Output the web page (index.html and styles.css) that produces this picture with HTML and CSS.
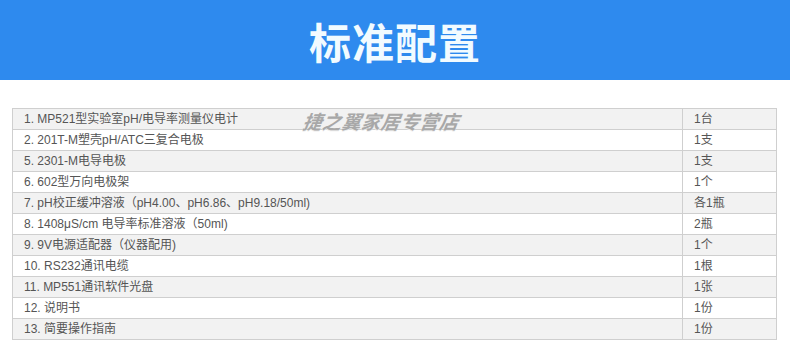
FILE: index.html
```html
<!DOCTYPE html>
<html lang="zh">
<head>
<meta charset="utf-8">
<link rel="stylesheet" href="styles.css">
</head>
<body>
<header class="banner"><h1 class="title">标准配置</h1></header>
<div class="wrap">
  <table class="cfg">
    <tr><td class="name">1. MP521型实验室pH/电导率测量仪电计</td><td class="qty">1台</td></tr>
    <tr><td class="name">2. 201T-M塑壳pH/ATC三复合电极</td><td class="qty">1支</td></tr>
    <tr><td class="name">5. 2301-M电导电极</td><td class="qty">1支</td></tr>
    <tr><td class="name">6. 602型万向电极架</td><td class="qty">1个</td></tr>
    <tr><td class="name">7. pH校正缓冲溶液（pH4.00、pH6.86、pH9.18/50ml)</td><td class="qty">各1瓶</td></tr>
    <tr><td class="name">8. 1408μS/cm 电导率标准溶液（50ml)</td><td class="qty">2瓶</td></tr>
    <tr><td class="name">9. 9V电源适配器（仪器配用)</td><td class="qty">1个</td></tr>
    <tr><td class="name">10. RS232通讯电缆</td><td class="qty">1根</td></tr>
    <tr><td class="name">11. MP551通讯软件光盘</td><td class="qty">1张</td></tr>
    <tr><td class="name">12. 说明书</td><td class="qty">1份</td></tr>
    <tr><td class="name">13. 简要操作指南</td><td class="qty">1份</td></tr>
  </table>
  <div class="mark">捷之翼家居专营店</div>
</div>
</body>
</html>
```
FILE: styles.css
```css
html, body { margin: 0; padding: 0; background: #fff; }
body { font-family: "Noto Sans CJK SC", "Liberation Sans", sans-serif; }
.banner {
  height: 80px;
  background: #2e8aee;
  display: flex;
  align-items: center;
  justify-content: center;
}
.title {
  margin: 0;
  color: #f2fbff;
  font-size: 42px;
  font-weight: 700;
  line-height: 1;
  letter-spacing: 1px;
  padding-top: 2px;
}
.wrap {
  position: relative;
  padding: 28px 13px 0 12px;
}
.cfg {
  width: 765px;
  border-collapse: collapse;
  font-family: "Liberation Sans", "Noto Sans CJK SC", sans-serif;
  font-size: 12px;
  color: #555;
}
.cfg td {
  border: 1px solid #cfcfcf;
  height: 20px;
  padding: 0 0 0 11px;
  line-height: 20px;
  box-sizing: border-box;
  white-space: nowrap;
}
.cfg tr:nth-child(odd) td { background: #f2f2f2; }
.cfg .qty { width: 94px; padding-left: 11px; }
.mark {
  position: absolute;
  left: 303px;
  top: 30px;
  font-size: 19px;
  line-height: 22px;
  font-weight: 700;
  font-style: italic;
  color: #a8a8a8;
  letter-spacing: 0.5px;
  text-shadow: 0 1px 0 #eee;
  transform: skewX(-8deg);
}
```
